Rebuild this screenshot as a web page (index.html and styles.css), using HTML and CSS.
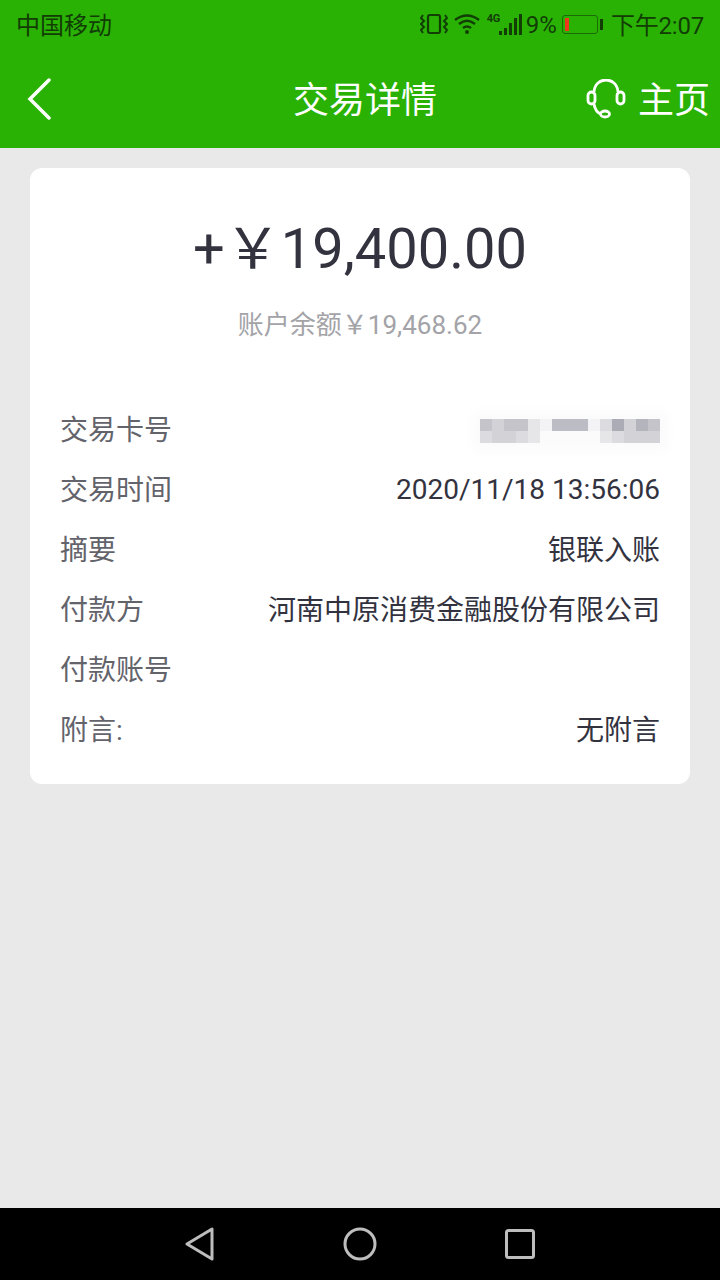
FILE: index.html
```html
<!DOCTYPE html>
<html lang="zh-CN">
<head>
    <meta charset="UTF-8">
    <meta name="viewport" content="width=device-width, initial-scale=1.0">
    <title>交易详情</title>
    <link rel="stylesheet" href="styles.css">
</head>
<body>
    <div class="phone">
        <div class="status-bar">
            <span class="carrier">中国移动</span>
            <div class="status-right">
                <svg class="icon-vibrate" width="28" height="20" viewBox="0 0 28 20">
                    <rect x="8" y="1" width="12" height="18" rx="2" fill="none" stroke="#123d05" stroke-width="2.200"/>
                    <path d="M3 1 L1 4 L4 7 L1 10 L4 13 L1 16 L3 19 M25 1 L27 4 L24 7 L27 10 L24 13 L27 16 L25 19" fill="none" stroke="#123d05" stroke-width="2"/>
                </svg>
                <svg class="icon-wifi" width="26" height="20" viewBox="0 0 26 20">
                    <path d="M1 6 Q13 -3 25 6 M5 10 Q13 3.500 21 10 M9 14 Q13 11 17 14" fill="none" stroke="#123d05" stroke-width="2.500"/>
                    <circle cx="13" cy="18" r="2" fill="#123d05"/>
                </svg>
                <div class="signal">
                    <span class="net-type">4G</span>
                    <div class="bars">
                        <i class="bar bar-1"></i>
                        <i class="bar bar-2"></i>
                        <i class="bar bar-3"></i>
                        <i class="bar bar-4"></i>
                        <i class="bar bar-5"></i>
                    </div>
                </div>
                <span class="percent">9%</span>
                <div class="battery">
                    <div class="battery-body"><div class="battery-level"></div></div>
                    <div class="battery-tip"></div>
                </div>
                <span class="clock">下午2:07</span>
            </div>
        </div>

        <header class="nav-bar">
            <svg class="icon-back" width="26" height="42" viewBox="0 0 26 42">
                <path d="M23 2 L4 21 L23 40" fill="none" stroke="#fff" stroke-width="3.500" stroke-linecap="round"/>
            </svg>
            <h1 class="nav-title">交易详情</h1>
            <div class="nav-home">
                <svg class="icon-service" width="40" height="40" viewBox="0 0 40 40">
                    <path d="M8 13 C9 -3 31 -3 32 13" fill="none" stroke="#fff" stroke-width="2.800"/>
                    <path d="M8 25 C9 31 12 34 15 35" fill="none" stroke="#fff" stroke-width="2.800"/>
                    <rect x="2" y="13" width="7" height="12" rx="3.500" fill="none" stroke="#fff" stroke-width="2.800"/>
                    <rect x="31" y="13" width="7" height="12" rx="3.500" fill="none" stroke="#fff" stroke-width="2.800"/>
                    <ellipse cx="19" cy="35" rx="4.500" ry="3" fill="none" stroke="#fff" stroke-width="2.800"/>
                </svg>
                <span class="home-text">主页</span>
            </div>
        </header>

        <main class="content">
            <section class="card">
                <div class="amount">+￥19,400.00</div>
                <div class="balance">账户余额￥19,468.62</div>
                <div class="rows">
                    <div class="row">
                        <span class="label">交易卡号</span>
                        <div class="masked">
                            <i class="s-b"></i><i class="s-c"></i><i class="s-b"></i><i class="s-b"></i><i class="s-e"></i>
                            <i class="s-f"></i><i class="s-a"></i><i class="s-a"></i><i class="s-a"></i><i class="s-f"></i>
                            <i class="s-d"></i><i class="s-k"></i><i class="s-c"></i><i class="s-m"></i><i class="s-b"></i>
                            <i class="s-d"></i><i class="s-c"></i><i class="s-c"></i><i class="s-d"></i><i class="s-e"></i>
                            <i class="s-w"></i><i class="s-w"></i><i class="s-w"></i><i class="s-w"></i><i class="s-w"></i>
                            <i class="s-e"></i><i class="s-d"></i><i class="s-c"></i><i class="s-c"></i><i class="s-c"></i>
                        </div>
                    </div>
                    <div class="row">
                        <span class="label">交易时间</span>
                        <span class="value value-time">2020/11/18 13:56:06</span>
                    </div>
                    <div class="row">
                        <span class="label">摘要</span>
                        <span class="value">银联入账</span>
                    </div>
                    <div class="row">
                        <span class="label">付款方</span>
                        <span class="value">河南中原消费金融股份有限公司</span>
                    </div>
                    <div class="row">
                        <span class="label">付款账号</span>
                        <span class="value"></span>
                    </div>
                    <div class="row">
                        <span class="label">附言:</span>
                        <span class="value">无附言</span>
                    </div>
                </div>
            </section>
        </main>

        <footer class="system-nav">
            <svg width="30" height="34" viewBox="0 0 30 34">
                <path d="M27 2 L27 32 L2 17 Z" fill="none" stroke="#bdbdbd" stroke-width="3" stroke-linejoin="round"/>
            </svg>
            <svg width="34" height="34" viewBox="0 0 34 34">
                <circle cx="17" cy="17" r="15" fill="none" stroke="#bdbdbd" stroke-width="3"/>
            </svg>
            <svg width="30" height="30" viewBox="0 0 30 30">
                <rect x="1.500" y="1.500" width="27" height="27" rx="2" fill="none" stroke="#bdbdbd" stroke-width="3"/>
            </svg>
        </footer>
    </div>
</body>
</html>
```

FILE: styles.css
```css
* {
    box-sizing: border-box;
}

html, body {
    margin: 0;
    padding: 0;
}

body {
    font-family: Roboto, "Noto Sans CJK SC", sans-serif;
    background-color: #e9e9e9;
}

.phone {
    width: 720px;
    height: 1280px;
    display: flex;
    flex-direction: column;
    overflow: hidden;
}

.status-bar {
    height: 50px;
    padding: 0 16px 4px 16px;
    display: flex;
    justify-content: space-between;
    align-items: center;
    background: #29b204;
    color: #123d05;
    font-size: 24px;
}

.status-right {
    display: flex;
    align-items: center;
}

.icon-vibrate,
.icon-wifi,
.signal,
.battery {
    margin-top: 2px;
}

.icon-vibrate {
    margin-right: 6px;
}

.icon-wifi {
    margin-right: 7px;
}

.signal {
    position: relative;
    width: 35px;
    height: 21px;
    margin-right: 4px;
}

.net-type {
    position: absolute;
    left: 0;
    top: -1px;
    font-size: 11px;
    font-weight: bold;
    line-height: 12px;
    letter-spacing: -0.5px;
}

.bars {
    height: 21px;
    display: flex;
    justify-content: flex-end;
    align-items: flex-end;
    gap: 2px;
}

.bar {
    width: 3px;
    background: #123d05;
}

.bar-1 { height: 4px; }
.bar-2 { height: 7px; }
.bar-3 { height: 12px; }
.bar-4 { height: 17px; }
.bar-5 { height: 21px; }

.percent {
    margin-top: 4px;
    margin-right: 5px;
}

.battery {
    display: flex;
    align-items: center;
    margin-right: 8px;
}

.battery-body {
    width: 36px;
    height: 19px;
    padding: 2px 2px;
    border: 1px solid #1c6b08;
    border-radius: 3px;
}

.battery-level {
    width: 4px;
    height: 13px;
    background: #f0361c;
}

.battery-tip {
    width: 3px;
    height: 11px;
    margin-left: 2px;
    background: #123d05;
}

.clock {
    letter-spacing: -0.2px;
}

.nav-bar {
    position: relative;
    height: 98px;
    padding: 0 10px 0 26px;
    display: flex;
    justify-content: space-between;
    align-items: center;
    background: #29b204;
    color: #fff;
}

.nav-title {
    position: absolute;
    left: 0;
    right: 0;
    margin: -4px 0 0;
    padding-left: 10px;
    text-align: center;
    font-size: 36px;
    font-weight: 400;
}

.nav-home {
    display: flex;
    align-items: center;
    gap: 12px;
    font-size: 36px;
}

.home-text {
    margin-bottom: 4px;
}

.content {
    flex: 1;
    padding: 20px 30px;
}

.card {
    height: 616px;
    padding: 46px 30px 0;
    background: #fff;
    border-radius: 12px;
}

.amount {
    text-align: center;
    color: #33333f;
    font-size: 56px;
    line-height: 70px;
}

.balance {
    margin-top: 23px;
    text-align: center;
    color: #a3a3a8;
    font-size: 26px;
    line-height: 36px;
}

.rows {
    margin-top: 55px;
}

.row {
    height: 60px;
    display: flex;
    justify-content: space-between;
    align-items: center;
    font-size: 28px;
}

.label {
    color: #63636b;
}

.value {
    color: #33333f;
}

.value-time {
    margin-top: 3px;
}

.masked {
    width: 180px;
    height: 24px;
    margin-top: 5px;
    display: grid;
    grid-template-columns: repeat(15, 12px);
    grid-template-rows: repeat(2, 12px);
    background: #fbfbfb;
    box-shadow: 0 0 12px 8px #fbfbfb;
}

.s-a { background: #bcbcc4; }
.s-b { background: #c4c4ca; }
.s-c { background: #d2d2d7; }
.s-d { background: #dcdce0; }
.s-e { background: #e6e6e9; }
.s-f { background: #f3f3f5; }
.s-k { background: #acacb6; }
.s-m { background: #b4b4bc; }
.s-w { background: #fbfbfb; }

.system-nav {
    height: 72px;
    padding: 0 185px;
    display: flex;
    justify-content: space-between;
    align-items: center;
    background: #000;
}
```
